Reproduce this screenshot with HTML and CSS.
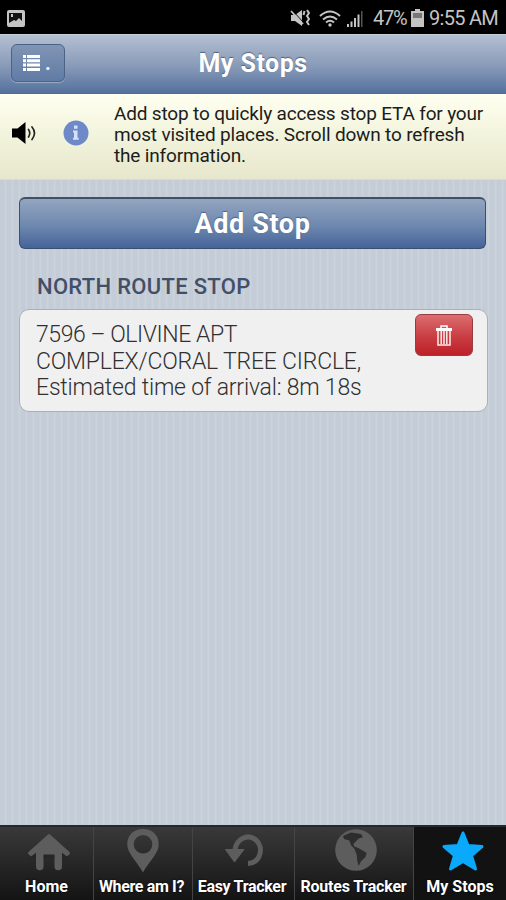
FILE: index.html
```
<!DOCTYPE html>
<html lang="en">
<head>
    <meta charset="UTF-8">
    <meta name="viewport" content="width=device-width, initial-scale=1.0">
    <title>My Stops</title>
    <link rel="stylesheet" href="styles.css">
</head>
<body>
    <!-- Phone status bar -->
    <div class="status-bar">
        <svg class="status-picture" width="18" height="17" viewBox="0 0 18 17">
            <rect width="18" height="17" rx="2" fill="#c4c4c4"/>
            <path d="M2 3h13v8l-3-3-3 3-2-1-5 3z" fill="#111"/>
            <path d="M4 4h2v3H4z" fill="#c4c4c4"/>
        </svg>
        <div class="status-right">
            <svg class="status-mute" width="20" height="18" viewBox="0 0 20 18">
                <path d="M1 6h4l7-5v16l-7-5H1z" fill="#c4c4c4"/>
                <path d="M2 1l12 13" stroke="#000" stroke-width="1"/>
                <path d="M1 2l12 13" stroke="#c4c4c4" stroke-width="1.800"/>
                <path d="M14.500 2l-1 4M17 1l2 3-2 3 2 3-2 3 2 3" fill="none" stroke="#c4c4c4" stroke-width="2"/>
            </svg>
            <svg class="status-wifi" width="22" height="17" viewBox="0 0 22 17">
                <g fill="none" stroke="#c4c4c4" stroke-width="2">
                    <path d="M1 6q10-9 20 0"/>
                    <path d="M4 9.500q7-6 14 0"/>
                    <path d="M7 12.500q4-3.500 8 0"/>
                </g>
                <circle cx="11" cy="15" r="1.700" fill="#c4c4c4"/>
            </svg>
            <svg class="status-signal" width="18" height="17" viewBox="0 0 18 17">
                <path d="M1 14h2v3H1zM4.500 11.500h2V17h-2zM8 8h2v9H8zM11.500 4.500h2V17h-2z" fill="#c4c4c4"/>
                <path d="M15 1h1.500v16H15z" fill="#555"/>
            </svg>
            <span class="status-percent">47%</span>
            <svg class="status-battery" width="13" height="18" viewBox="0 0 13 18">
                <path d="M4 0h5v2h4v16H0V2h4z" fill="#c4c4c4"/>
                <path d="M2 4h9v5H2z" fill="#777"/>
            </svg>
            <span class="status-time">9:55 AM</span>
        </div>
    </div>

    <!-- Header -->
    <div class="header">
        <button class="menu-btn">
            <svg width="17" height="16" viewBox="0 0 17 16">
                <path d="M0 0h3v3H0zM4 0h13v3H4zM0 4.300h3v3H0zM4 4.300h13v3H4zM0 8.600h3v3H0zM4 8.600h13v3H4zM0 12.900h3v3H0zM4 12.900h13v3H4z" fill="#fff"/>
            </svg>
            <span class="menu-dot">.</span>
        </button>
        <h1>My Stops</h1>
    </div>

    <!-- Help message -->
    <div class="notice">
        <svg class="speaker" width="26" height="24" viewBox="0 0 26 24">
            <path d="M0 7.500h5.500L13.500 1v22l-8-6.500H0z" fill="#000"/>
            <path d="M16.500 8.500q2.500 3.500 0 7.500M20 6q5 6 0 12.500" fill="none" stroke="#222" stroke-width="1.700" stroke-linecap="round"/>
        </svg>
        <svg class="info" width="26" height="26" viewBox="0 0 26 26">
            <circle cx="13" cy="13" r="12.500" fill="#6e89c8"/>
            <path d="M11 5.500h3.500v3.200H11zM10 10.500h4.500v7.300h1.200v2H10v-2h1v-5.300h-1z" fill="#d3e2f8"/>
        </svg>
        <p>Add stop to quickly access stop ETA for your<br>most visited places. Scroll down to refresh<br>the information.</p>
    </div>

    <!-- Stops -->
    <div class="content">
        <button class="add-btn">Add Stop</button>
        <h2>NORTH ROUTE STOP</h2>
        <div class="stop-card">
            <p><span class="stop-name">7596 – OLIVINE APT</span><br>COMPLEX/CORAL TREE CIRCLE,<br>Estimated time of arrival: 8m 18s</p>
            <button class="delete-btn">
                <svg width="18" height="21" viewBox="0 0 18 21">
                    <path d="M6 3V1h6v2" fill="none" stroke="#fff" stroke-width="1.500"/>
                    <path d="M1 3h16v3H1z" fill="#fff"/>
                    <path d="M3 6v14h12V6M6.200 6v13M9 6v13M11.800 6v13" fill="none" stroke="#ffeded" stroke-width="1.500"/>
                </svg>
            </button>
        </div>
    </div>

    <!-- Bottom tabs -->
    <div class="tabs">
        <div class="tab tab-home">
            <svg width="44" height="44" viewBox="0 0 44 44">
                <path d="M2.500 24L22 6.500 41.500 24l-3 2.500H5.500z" fill="#5d5d5d" stroke="#5d5d5d" stroke-width="3" stroke-linejoin="round"/>
                <path d="M9 24h26v13.500a3.500 3.500 0 0 1-7.500 0V27h-11v10.500a3.500 3.500 0 0 1-7.500 0z" fill="#5d5d5d"/>
                <path d="M16.500 25.500h11V29h-11zM3 28.200l6-4.500V30H3zM41 28.200l-6-4.500V30h6z" fill="#262626"/>
            </svg>
            <span>Home</span>
        </div>
        <div class="tab tab-where">
            <svg width="44" height="44" viewBox="0 0 44 44">
                <path fill-rule="evenodd" d="M22 0C12 0 5 7 6.500 18 8 26 17 34 22 43.500 27 34 36 26 37.500 18 39 7 32 0 22 0zm0 6a9.300 9.300 0 1 1 0 18.600A9.300 9.300 0 0 1 22 6z" fill="#5d5d5d"/>
            </svg>
            <span>Where am I?</span>
        </div>
        <div class="tab tab-easy">
            <svg width="44" height="44" viewBox="0 0 44 44">
                <path d="M13 21C14 10 26 4 34 11s5 23-8 23.500" fill="none" stroke="#5d5d5d" stroke-width="5"/>
                <path d="M3.500 20.500H22L12.500 33z" fill="#5d5d5d" stroke="#5d5d5d" stroke-linejoin="round"/>
            </svg>
            <span>Easy Tracker</span>
        </div>
        <div class="tab tab-routes">
            <svg width="44" height="44" viewBox="0 0 44 44">
                <circle cx="22" cy="22" r="20.800" fill="#5d5d5d"/>
                <path d="M9 8l8-3.400 10 1.400 2 3.300-4.300 1.300-2.700 2.700-2.700 2.700 1 2.600 5 2 7.400 4.400-1.400 4.300-4.300 4-2.300 4.700-1.400-5-.6-6.400-2.400-6-3.300-3.300-1.700-4.700L10 11z" fill="#2d2d2d"/>
            </svg>
            <span>Routes Tracker</span>
        </div>
        <div class="tab tab-stops active">
            <svg width="44" height="44" viewBox="0 0 44 44">
                <path d="M22 4l5 12.500 14 1L30.500 26.500l4 13.500L22 32.500 9.500 40l4-13.500L3 17.500l14-1z" fill="#0aa9fb" stroke="#0aa9fb" stroke-width="3" stroke-linejoin="round"/>
            </svg>
            <span>My Stops</span>
        </div>
    </div>
</body>
</html>
```
FILE: styles.css
```
* {
    margin: 0;
    padding: 0;
    box-sizing: border-box;
}

body {
    font-family: Roboto, "Liberation Sans", sans-serif;
    width: 506px;
    height: 900px;
    display: flex;
    flex-direction: column;
    overflow: hidden;
    background: repeating-linear-gradient(to right, #c4ccd8 0px, #c4ccd8 4px, #cad2db 5px, #cad2db 6px, #c4ccd8 7px);
}

svg {
    display: block;
    flex-shrink: 0;
}

button {
    font-family: inherit;
    color: white;
}

/* Status bar */
.status-bar {
    height: 34px;
    background-color: #000;
    color: #c4c4c4;
    display: flex;
    justify-content: space-between;
    padding: 2px 8px 0 7px;
    align-items: center;
    font-size: 20px;
}

.status-right {
    display: flex;
    align-items: center;
}

.status-wifi {
    margin-left: 9px;
}

.status-signal {
    margin-left: 5px;
}

.status-percent {
    width: 34px;
    margin-left: 9px;
    letter-spacing: -1.3px;
}

.status-battery {
    margin: 0 5px 0 4px;
}

.status-time {
    width: 69px;
    letter-spacing: -0.7px;
    white-space: nowrap;
}

/* Header */
.header {
    height: 60px;
    display: grid;
    grid-template-columns: 66px 1fr 66px;
    align-items: center;
    background: linear-gradient(#b4c0d1, #8799b8 55%, #54719e);
    border-top: 1px solid #c5ced9;
    border-bottom: 1px solid #526b91;
}

.header h1 {
    font-size: 25px;
    line-height: 30px;
    letter-spacing: 0.5px;
    color: white;
    text-align: center;
    text-shadow: 0 -1px 1px #4d6282;
}

.menu-btn {
    width: 54px;
    height: 38px;
    margin: -2px 0 0 11px;
    display: flex;
    align-items: center;
    padding-left: 11px;
    border: 1px solid #4d6386;
    border-radius: 6px;
    background: linear-gradient(#8195b5, #607ba5);
    box-shadow: 0 1px 1px #9badc5;
}

.menu-dot {
    font-size: 20px;
    font-weight: bold;
    margin-left: 5px;
}

/* Help message */
.notice {
    height: 86px;
    display: flex;
    padding: 9px 0 0 12px;
    background: linear-gradient(#fffff0, #f2f3dc 50%, #e7e7cd);
    border-bottom: 1px solid #d9d9cf;
}

.speaker {
    margin-top: 18px;
}

.info {
    margin: 17px 0 0 25px;
}

.notice p {
    margin-left: 25px;
    font-size: 19px;
    line-height: 21px;
    letter-spacing: -0.17px;
    color: #1c1c1c;
    white-space: nowrap;
}

/* Stops */
.content {
    flex: 1;
    padding: 17px 18px 0 19px;
}

.add-btn {
    display: block;
    width: 467px;
    height: 52px;
    font-size: 27px;
    font-weight: bold;
    letter-spacing: 0.6px;
    border: 1px solid #37506f;
    border-top: 2px solid #405066;
    border-radius: 6px;
    background: linear-gradient(#94a5c0, #6c88ae 55%, #46639a);
    text-shadow: 0 -1px 1px #4d6282;
}

.content h2 {
    margin: 24px 0 0 18px;
    font-size: 22px;
    line-height: 28px;
    letter-spacing: 0.3px;
    font-weight: 500;
    color: #424f67;
}

.stop-card {
    height: 103px;
    margin-top: 8px;
    display: flex;
    justify-content: space-between;
    padding: 12px 14px 0 16px;
    background-color: #f0f0f0;
    border: 1px solid #acafb8;
    border-radius: 10px;
}

.stop-card p {
    font-size: 23px;
    line-height: 26.500px;
    letter-spacing: -0.2px;
    font-weight: 300;
    color: #303030;
    white-space: nowrap;
}

.stop-name {
    letter-spacing: -0.43px;
}

.delete-btn {
    width: 58px;
    height: 42px;
    margin-top: -8px;
    display: flex;
    align-items: center;
    justify-content: center;
    border: 1px solid #973c43;
    border-radius: 6px;
    background: linear-gradient(#dc6e70, #ca4146 50%, #bd2028);
}

/* Bottom tabs */
.tabs {
    height: 75px;
    display: flex;
    background: linear-gradient(#393939, #141414);
    border-top: 2px solid #26292b;
}

.tab {
    display: flex;
    flex-direction: column;
    align-items: center;
    padding-top: 2px;
    border-left: 1px solid #444;
    color: white;
    font-size: 16px;
    font-weight: bold;
}

.tab span {
    line-height: 20px;
    margin-top: 4px;
    white-space: nowrap;
    text-shadow: 0 0 2px black;
}

.tab-home {
    width: 93px;
    border-left: none;
}

.tab-home svg {
    margin-left: 4px;
}

.tab-where {
    width: 99px;
    padding-right: 3px;
    letter-spacing: -0.35px;
}

.tab-where svg {
    margin-left: 3px;
}

.tab-easy {
    width: 102px;
    padding-right: 3px;
    letter-spacing: -0.3px;
}

.tab-easy svg {
    margin-left: 3px;
}

.tab-routes {
    width: 119px;
    padding-right: 1px;
    letter-spacing: -0.2px;
}

.tab-routes svg {
    margin: -1px 0 1px 5px;
}

.tab-stops {
    width: 93px;
}

.tab-stops svg {
    margin-left: 5px;
}

.tab.active {
    background-color: #121212;
}
```
